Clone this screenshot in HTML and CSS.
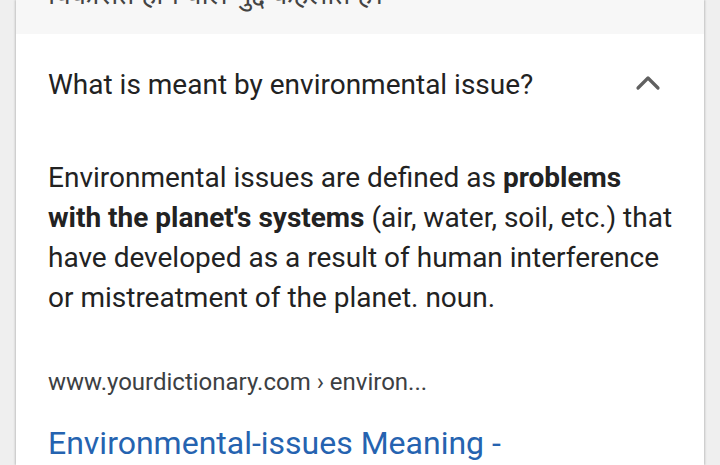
FILE: index.html
```html
<!DOCTYPE html>
<html lang="en">
<head>
<meta charset="utf-8">
<link rel="stylesheet" href="styles.css">
</head>
<body>
<div class="card">
  <div class="prev">
    <span class="prev-text" lang="hi">विकसित होने वाले मुद्दे कहलाते हैं।</span>
  </div>
  <div class="qa">
    <div class="question">
      <span class="q-text">What is meant by environmental issue?</span>
      <svg class="chev" width="26" height="16" viewBox="0 0 26 16"><path d="M3 13 L13 3 L23 13" fill="none" stroke="#606060" stroke-width="3.2" stroke-linecap="round" stroke-linejoin="round"/></svg>
    </div>
    <p class="answer">Environmental issues are defined as <b>problems with the planet's systems</b> (air, water, soil, etc.) that have developed as a result of human interference or mistreatment of the planet. noun.</p>
    <div class="source">www.yourdictionary.com › environ...</div>
    <div class="title">Environmental-issues Meaning -</div>
  </div>
</div>
</body>
</html>
```
FILE: styles.css
```css
html, body {
  margin: 0;
  padding: 0;
}
body {
  background: #efefef;
  font-family: Roboto, "Noto Sans", "Liberation Sans", sans-serif;
  height: 465px;
  overflow: hidden;
}
.card {
  margin: 0 16px;
  background: #ffffff;
  box-shadow: -1px 0 2px rgba(0,0,0,0.18), 1px 0 2px rgba(0,0,0,0.18);
  height: 465px;
}
.prev {
  height: 34px;
  background: #f7f7f7;
  overflow: hidden;
  display: flex;
  align-items: flex-end;
  padding: 0 32px;
}
.prev-text {
  font-size: 28px;
  line-height: 34px;
  color: #444;
  margin-bottom: 22px;
  white-space: nowrap;
}
.qa {
  padding: 0 32px;
}
.question {
  height: 100px;
  display: flex;
  align-items: center;
  justify-content: space-between;
}
.q-text {
  font-size: 28px;
  color: #222222;
}
.chev {
  margin-right: 11px;
  margin-top: -3px;
}
.answer {
  margin: 24px -6px 0 0;
  font-size: 28px;
  line-height: 40px;
  color: #222222;
}
.answer b {
  font-weight: 700;
}
.source {
  margin-top: 49px;
  font-size: 24px;
  line-height: 30px;
  color: #3c4043;
}
.title {
  margin-top: 27px;
  font-size: 32px;
  line-height: 38px;
  color: #2563b0;
}
```
